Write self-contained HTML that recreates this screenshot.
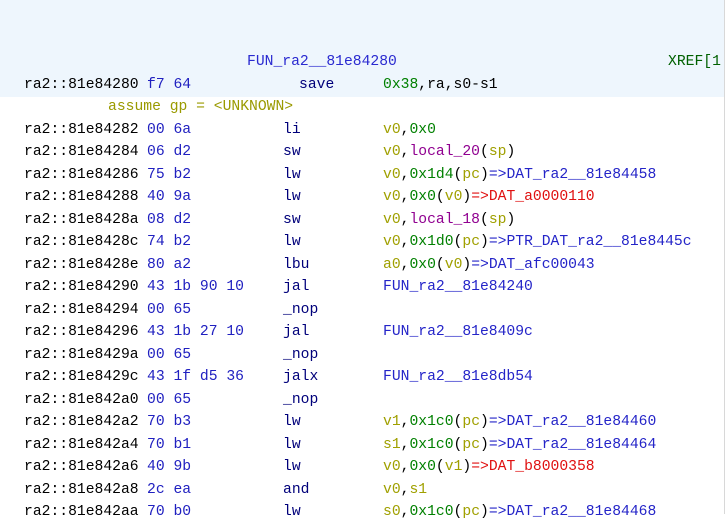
<!DOCTYPE html>
<html><head><meta charset="utf-8"><style>
body{margin:0;width:728px;height:514px;overflow:hidden;background:#fff;font-family:"Liberation Mono",monospace;font-size:14.7px;}
.top{position:absolute;left:0;top:0;width:724px;height:97px;background:#eef6fd;}
.vl{position:absolute;left:724px;top:0;width:1px;height:514px;background:#d8d8d8;}
.r{position:absolute;left:0;height:18px;line-height:18px;white-space:pre;}
.a{position:absolute;left:24px;color:#000;}
.b{position:absolute;left:147px;color:#2020c0;}
.m{position:absolute;left:283px;color:#00007a;}
.o{position:absolute;left:383px;color:#000;}
.g{color:#a0a000}.c{color:#008000}.d{color:#2424c8}.e{color:#e01010}.p{color:#900090}
</style></head><body>
<div class="top"></div><div class="vl"></div>
<div class="r" style="top:53px;left:247px;color:#2a2ad0">FUN_ra2__81e84280</div>
<div class="r" style="top:53px;left:668px;color:#006000">XREF[1</div>
<div class="r" style="top:76px"><span class="a">ra2::81e84280</span><span class="b">f7 64</span><span class="m" style="left:299px">save</span><span class="o"><span class="c">0x38</span>,ra,s0-s1</span></div>
<div class="r" style="top:98px;left:108px;color:#9a9a00">assume gp = &lt;UNKNOWN&gt;</div>
<div class="r" style="top:121px"><span class="a">ra2::81e84282</span><span class="b">00 6a</span><span class="m">li</span><span class="o"><span class="g">v0</span>,<span class="c">0x0</span></span></div>
<div class="r" style="top:143px"><span class="a">ra2::81e84284</span><span class="b">06 d2</span><span class="m">sw</span><span class="o"><span class="g">v0</span>,<span class="p">local_20</span>(<span class="g">sp</span>)</span></div>
<div class="r" style="top:166px"><span class="a">ra2::81e84286</span><span class="b">75 b2</span><span class="m">lw</span><span class="o"><span class="g">v0</span>,<span class="c">0x1d4</span>(<span class="g">pc</span>)<span class="d">=&gt;DAT_ra2__81e84458</span></span></div>
<div class="r" style="top:188px"><span class="a">ra2::81e84288</span><span class="b">40 9a</span><span class="m">lw</span><span class="o"><span class="g">v0</span>,<span class="c">0x0</span>(<span class="g">v0</span>)<span class="e">=&gt;DAT_a0000110</span></span></div>
<div class="r" style="top:211px"><span class="a">ra2::81e8428a</span><span class="b">08 d2</span><span class="m">sw</span><span class="o"><span class="g">v0</span>,<span class="p">local_18</span>(<span class="g">sp</span>)</span></div>
<div class="r" style="top:233px"><span class="a">ra2::81e8428c</span><span class="b">74 b2</span><span class="m">lw</span><span class="o"><span class="g">v0</span>,<span class="c">0x1d0</span>(<span class="g">pc</span>)<span class="d">=&gt;PTR_DAT_ra2__81e8445c</span></span></div>
<div class="r" style="top:256px"><span class="a">ra2::81e8428e</span><span class="b">80 a2</span><span class="m">lbu</span><span class="o"><span class="g">a0</span>,<span class="c">0x0</span>(<span class="g">v0</span>)<span class="d">=&gt;DAT_afc00043</span></span></div>
<div class="r" style="top:278px"><span class="a">ra2::81e84290</span><span class="b">43 1b 90 10</span><span class="m">jal</span><span class="o"><span class="d">FUN_ra2__81e84240</span></span></div>
<div class="r" style="top:301px"><span class="a">ra2::81e84294</span><span class="b">00 65</span><span class="m">_nop</span></div>
<div class="r" style="top:323px"><span class="a">ra2::81e84296</span><span class="b">43 1b 27 10</span><span class="m">jal</span><span class="o"><span class="d">FUN_ra2__81e8409c</span></span></div>
<div class="r" style="top:346px"><span class="a">ra2::81e8429a</span><span class="b">00 65</span><span class="m">_nop</span></div>
<div class="r" style="top:368px"><span class="a">ra2::81e8429c</span><span class="b">43 1f d5 36</span><span class="m">jalx</span><span class="o"><span class="d">FUN_ra2__81e8db54</span></span></div>
<div class="r" style="top:391px"><span class="a">ra2::81e842a0</span><span class="b">00 65</span><span class="m">_nop</span></div>
<div class="r" style="top:413px"><span class="a">ra2::81e842a2</span><span class="b">70 b3</span><span class="m">lw</span><span class="o"><span class="g">v1</span>,<span class="c">0x1c0</span>(<span class="g">pc</span>)<span class="d">=&gt;DAT_ra2__81e84460</span></span></div>
<div class="r" style="top:436px"><span class="a">ra2::81e842a4</span><span class="b">70 b1</span><span class="m">lw</span><span class="o"><span class="g">s1</span>,<span class="c">0x1c0</span>(<span class="g">pc</span>)<span class="d">=&gt;DAT_ra2__81e84464</span></span></div>
<div class="r" style="top:458px"><span class="a">ra2::81e842a6</span><span class="b">40 9b</span><span class="m">lw</span><span class="o"><span class="g">v0</span>,<span class="c">0x0</span>(<span class="g">v1</span>)<span class="e">=&gt;DAT_b8000358</span></span></div>
<div class="r" style="top:481px"><span class="a">ra2::81e842a8</span><span class="b">2c ea</span><span class="m">and</span><span class="o"><span class="g">v0</span>,<span class="g">s1</span></span></div>
<div class="r" style="top:503px"><span class="a">ra2::81e842aa</span><span class="b">70 b0</span><span class="m">lw</span><span class="o"><span class="g">s0</span>,<span class="c">0x1c0</span>(<span class="g">pc</span>)<span class="d">=&gt;DAT_ra2__81e84468</span></span></div>
</body></html>
